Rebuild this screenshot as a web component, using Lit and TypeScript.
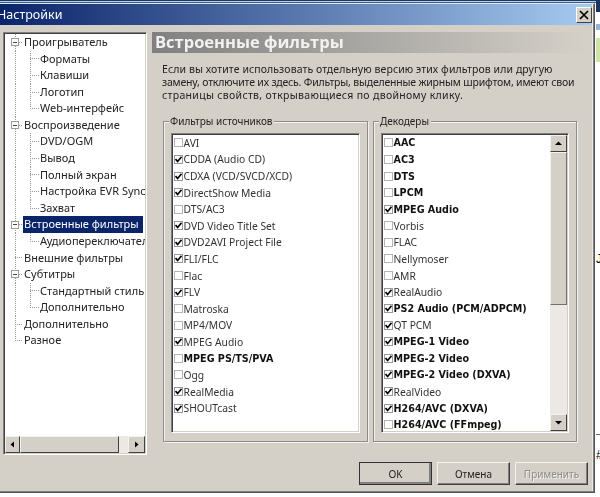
import { LitElement, html, css, svg } from "lit";
import { customElement } from "lit/decorators.js";

type Item = [string, boolean, boolean];
const SRC: Item[] = [
  ["AVI", false, false], ["CDDA (Audio CD)", true, false], ["CDXA (VCD/SVCD/XCD)", true, false],
  ["DirectShow Media", true, false], ["DTS/AC3", false, false], ["DVD Video Title Set", true, false],
  ["DVD2AVI Project File", true, false], ["FLI/FLC", true, false], ["Flac", false, false],
  ["FLV", true, false], ["Matroska", false, false], ["MP4/MOV", false, false],
  ["MPEG Audio", true, false], ["MPEG PS/TS/PVA", false, true], ["Ogg", false, false],
  ["RealMedia", true, false], ["SHOUTcast", true, false],
];
const DEC: Item[] = [
  ["AAC", false, true], ["AC3", false, true], ["DTS", false, true], ["LPCM", false, true],
  ["MPEG Audio", true, true], ["Vorbis", false, false], ["FLAC", false, false], ["Nellymoser", false, false],
  ["AMR", false, false], ["RealAudio", true, false], ["PS2 Audio (PCM/ADPCM)", true, true], ["QT PCM", true, false],
  ["MPEG-1 Video", true, true], ["MPEG-2 Video", true, true], ["MPEG-2 Video (DXVA)", true, true],
  ["RealVideo", true, false], ["H264/AVC (DXVA)", true, true], ["H264/AVC (FFmpeg)", false, true],
];
type Node = { t: string; l: number; exp?: boolean; last?: boolean; end?: boolean; sel?: boolean };
const TREE: Node[] = [
  { t: "Проигрыватель", l: 0, exp: true },
  { t: "Форматы", l: 1 }, { t: "Клавиши", l: 1 }, { t: "Логотип", l: 1 }, { t: "Web-интерфейс", l: 1, last: true },
  { t: "Воспроизведение", l: 0, exp: true },
  { t: "DVD/OGM", l: 1 }, { t: "Вывод", l: 1 }, { t: "Полный экран", l: 1 }, { t: "Настройка EVR Sync", l: 1 }, { t: "Захват", l: 1, last: true },
  { t: "Встроенные фильтры", l: 0, exp: true, sel: true },
  { t: "Аудиопереключатель", l: 1, last: true },
  { t: "Внешние фильтры", l: 0 },
  { t: "Субтитры", l: 0, exp: true },
  { t: "Стандартный стиль", l: 1 }, { t: "Дополнительно", l: 1, last: true },
  { t: "Дополнительно", l: 0 },
  { t: "Разное", l: 0, end: true },
];

const arrow = (d: string) => svg`<svg class="tri" width="9" height="9" viewBox="0 0 9 9"><path d="${d}" fill="#000"/></svg>`;

@customElement("app-root")
export class AppRoot extends LitElement {
  static styles = css`
    :host { display: block; position: relative; width: 600px; height: 497px; overflow: hidden; background: #fff;
      font-family: "Noto Sans", sans-serif; font-size: 11px; color: #222; }
    .strip-top { position: absolute; left: 0; top: 0; width: 600px; height: 3px;
      background: linear-gradient(#123a6e 0 1px, #b9cfe6 1px 2px, #3a5f8f 2px 3px); }
    .strip-r { position: absolute; left: 596px; top: 0; width: 4px; height: 497px;
      background: linear-gradient(#1c3560 0 12px, #fff 12px 24px, #8fb5dc 24px 30px, #fff 30px 38px, #cfe5a8 38px 62px, #fff 62px 434px, #666 434px 435px, #fff 435px); }
    .glyph { position: absolute; left: 596px; font: 12px "Liberation Sans", sans-serif; color: #000; }
    .dialog { position: absolute; left: 0; top: 3px; width: 595px; height: 490px; box-sizing: border-box; background: #d4d0c8;
      border-top: 1px solid #e8e6e0; border-right: 1px solid #555; border-bottom: 1px solid #555;
      box-shadow: inset -1px -1px 0 #808080, inset -2px 0 0 #ece9e4;
      display: flex; flex-direction: column; filter: blur(0.3px); }
    .title { height: 21px; margin-right: 2px; display: flex; align-items: center; justify-content: space-between;
      background: linear-gradient(90deg, #0a246a, #a6caf0); flex: none; }
    .title span { color: #fff; font: 12.5px "Noto Sans", sans-serif; margin-left: -3px; }
    .close { width: 16px; height: 16px; box-sizing: border-box; background: #d4d0c8; display: flex; align-items: center; justify-content: center;
      border: 1px solid; border-color: #fff #404040 #404040 #fff; }
    .main { flex: none; display: flex; gap: 5px; padding: 7px 0 0 3px; }
    .sunken { box-sizing: border-box; background: #fff; border: 1px solid; border-color: #808080 #fff #fff #808080;
      box-shadow: inset 1px 1px 0 #404040, inset -1px -1px 0 #d4d0c8; padding: 1px; }
    .tree { width: 144px; height: 423px; display: flex; flex-direction: column; flex: none; }
    .tree-rows { flex: 1; overflow: hidden; min-height: 0; padding-left: 3px; }
    .node { height: 16.58px; display: flex; align-items: stretch; white-space: nowrap; font-size: 11px; color: #222; }
    .cell { width: 15px; flex: none; background-repeat: no-repeat; display: flex; align-items: center; }
    .cell.w { width: 16px; }
    .v { background-image: repeating-linear-gradient(#999 0 1px, transparent 1px 2px); background-size: 1px 100%; background-position: 7px 0; }
    .t { background-image: repeating-linear-gradient(#999 0 1px, transparent 1px 2px), repeating-linear-gradient(90deg, #999 0 1px, transparent 1px 2px);
      background-size: 1px 100%, 9px 1px; background-position: 7px 0, 7px 50%; }
    .e { background-image: repeating-linear-gradient(#999 0 1px, transparent 1px 2px), repeating-linear-gradient(90deg, #999 0 1px, transparent 1px 2px);
      background-size: 1px 50%, 9px 1px; background-position: 7px 0, 7px 50%; }
    .exp { width: 8px; height: 8px; margin-left: 3px; box-sizing: border-box; border: 1px solid #9a9a9a; background:
      linear-gradient(#444, #444) center / 4px 1px no-repeat, #fff; }
    .label { padding: 0 1px; line-height: 16px; }
    .label.sel { background: #0a246a; color: #fff; flex: none; width: 118px; overflow: hidden; }
    .hbar { height: 17px; display: flex; flex: none; background: #ece9e4; }
    .sbtn { flex: none; box-sizing: border-box; width: 15px; height: 17px; display: flex; align-items: center; justify-content: center; background: #d4d0c8;
      border: 1px solid; border-color: #f4f2ee #404040 #404040 #f4f2ee; }
    .sbtn.r { width: 17px; margin-left: auto; }
    .hthumb { width: 99px; background: #d4d0c8; box-sizing: border-box; border: 1px solid; border-color: #f4f2ee #404040 #404040 #f4f2ee; }
    .pane { width: 433px; flex: none; }
    .head { height: 21px; background: linear-gradient(90deg, #808080, #d4d0c8); color: #f2f2f2; font-family: "Open Sans", sans-serif; font-size: 16.5px; font-weight: 700; line-height: 20px; padding-left: 3px; white-space: nowrap; }
    .desc { margin: 10px 0 0 10px; line-height: 13px; font-size: 10.5px; color: #222; white-space: nowrap; height: 39px; }
    .l1 { letter-spacing: 0.09px; }
    .l2 { letter-spacing: -0.19px; }
    .l3 { letter-spacing: 0.32px; }
    .groups { display: flex; gap: 5px; margin: 19px 0 0 11px; }
    .group { width: 205px; height: 321px; box-sizing: border-box; border: 1px solid #8c8c88; box-shadow: 1px 1px 0 #f4f2ee, inset 1px 1px 0 #f4f2ee; padding: 0 7px; }
    .group.narrow { width: 204px; }
    .legend { width: fit-content; margin: -7px 0 0 -2px; padding: 0 2px 0 1px; height: 13px; line-height: 13px; background: #d4d0c8; font-size: 10px; color: #222; }
    .list { margin-top: 5px; height: 300px; display: flex; }
    .rows { flex: 1; min-width: 0; overflow: hidden; margin-top: -0.4px; }
    .row { height: 16.58px; display: flex; align-items: center; white-space: nowrap; padding-left: 0.5px; gap: 1px; color: #333; font-size: 10.3px; }
    .row.b { font-family: "DejaVu Sans", sans-serif; font-size: 9.6px; font-weight: 700; color: #111; }
    .cb { width: 9px; height: 9px; box-sizing: border-box; border: 1px solid #b4b4b4; background: #fff; flex: none; display: flex; }
    .cb.on { border-color: #999; }
    .vbar { width: 17px; flex: none; display: flex; flex-direction: column; background: #ece9e4; }
    .vb { box-sizing: border-box; height: 17px; flex: none; display: flex; align-items: center; justify-content: center; background: #d4d0c8;
      border: 1px solid; border-color: #f4f2ee #404040 #404040 #f4f2ee; }
    .vthumb { height: 153px; flex: none; box-sizing: border-box; background: #d4d0c8; border: 1px solid; border-color: #f4f2ee #707070 #707070 #f4f2ee; }
    .vfill { flex: 1; }
    .buttons { display: flex; justify-content: flex-end; gap: 5px; padding: 7px 6px 0 0; }
    .btn { width: 73px; height: 23px; box-sizing: border-box; display: flex; align-items: center; justify-content: center; font-size: 10px; color: #222;
      border: 1px solid; border-color: #f4f2ee #404040 #404040 #f4f2ee; background: #d4d0c8; box-shadow: inset -1px -1px 0 #808080; }
    .btn.def { outline: 1px solid #333; outline-offset: -1px; box-shadow: inset -2px -2px 0 #808080; }
    .btn.dis { color: #8c8c8c; text-shadow: 1px 1px 0 #f4f2ee; }
    .tri { display: block; }
  `;

  private cells(n: Node) {
    if (n.l === 0) {
      return html`<div class="cell ${n.end ? "e" : "t"}">${n.exp ? html`<div class="exp"></div>` : ""}</div>`;
    }
    return html`<div class="cell v"></div><div class="cell w ${n.last ? "e" : "t"}"></div>`;
  }

  private list(items: Item[]) {
    return html`<div class="rows">${items.map(([t, on, b]) => html`
      <div class="row ${b ? "b" : ""}"><span class="cb ${on ? "on" : ""}">${on ? svg`<svg width="7" height="7" viewBox="0 0 7 7"><path d="M0.5 3 L2.6 5.4 L6.5 0.8" fill="none" stroke="#000" stroke-width="1.6"/></svg>` : ""}</span><span>${t}</span></div>`)}</div>`;
  }

  render() {
    return html`
      <div class="strip-top"></div>
      <div class="strip-r"></div>
      <div class="glyph" style="top:252px">J</div>
      <div class="glyph" style="top:448px">#</div>
      <div class="dialog">
        <div class="title">
          <span>Настройки</span>
          <div class="close"><svg width="10" height="10" viewBox="0 0 10 10"><path d="M1 1 L9 9 M9 1 L1 9" stroke="#000" stroke-width="1.7"/></svg></div>
        </div>
        <div class="main">
          <div class="tree sunken">
            <div class="tree-rows">
              ${TREE.map((n) => html`<div class="node">${this.cells(n)}<div class="label ${n.sel ? "sel" : ""}">${n.t}</div></div>`)}
            </div>
            <div class="hbar">
              <div class="sbtn">${arrow("M6 1.5 V7.5 L2.5 4.5 Z")}</div>
              <div class="hthumb"></div>
              <div class="sbtn r">${arrow("M3 1.5 V7.5 L6.5 4.5 Z")}</div>
            </div>
          </div>
          <div class="pane">
            <div class="head">Встроенные фильтры</div>
            <div class="desc">
              <div class="l1">Если вы хотите использовать отдельную версию этих фильтров или другую</div>
              <div class="l2">замену, отключите их здесь. Фильтры, выделенные жирным шрифтом, имеют свои</div>
              <div class="l3">страницы свойств, открывающиеся по двойному клику.</div>
            </div>
            <div class="groups">
              <div class="group">
                <div class="legend">Фильтры источников</div>
                <div class="list sunken">${this.list(SRC)}</div>
              </div>
              <div class="group narrow">
                <div class="legend">Декодеры</div>
                <div class="list sunken">
                  ${this.list(DEC)}
                  <div class="vbar">
                    <div class="vb">${arrow("M1 6 H8 L4.5 2.5 Z")}</div>
                    <div class="vthumb"></div>
                    <div class="vfill"></div>
                    <div class="vb">${arrow("M1 3 H8 L4.5 6.5 Z")}</div>
                  </div>
                </div>
              </div>
            </div>
          </div>
        </div>
        <div class="buttons">
          <div class="btn def">OK</div>
          <div class="btn">Отмена</div>
          <div class="btn dis">Применить</div>
        </div>
      </div>
    `;
  }
}
